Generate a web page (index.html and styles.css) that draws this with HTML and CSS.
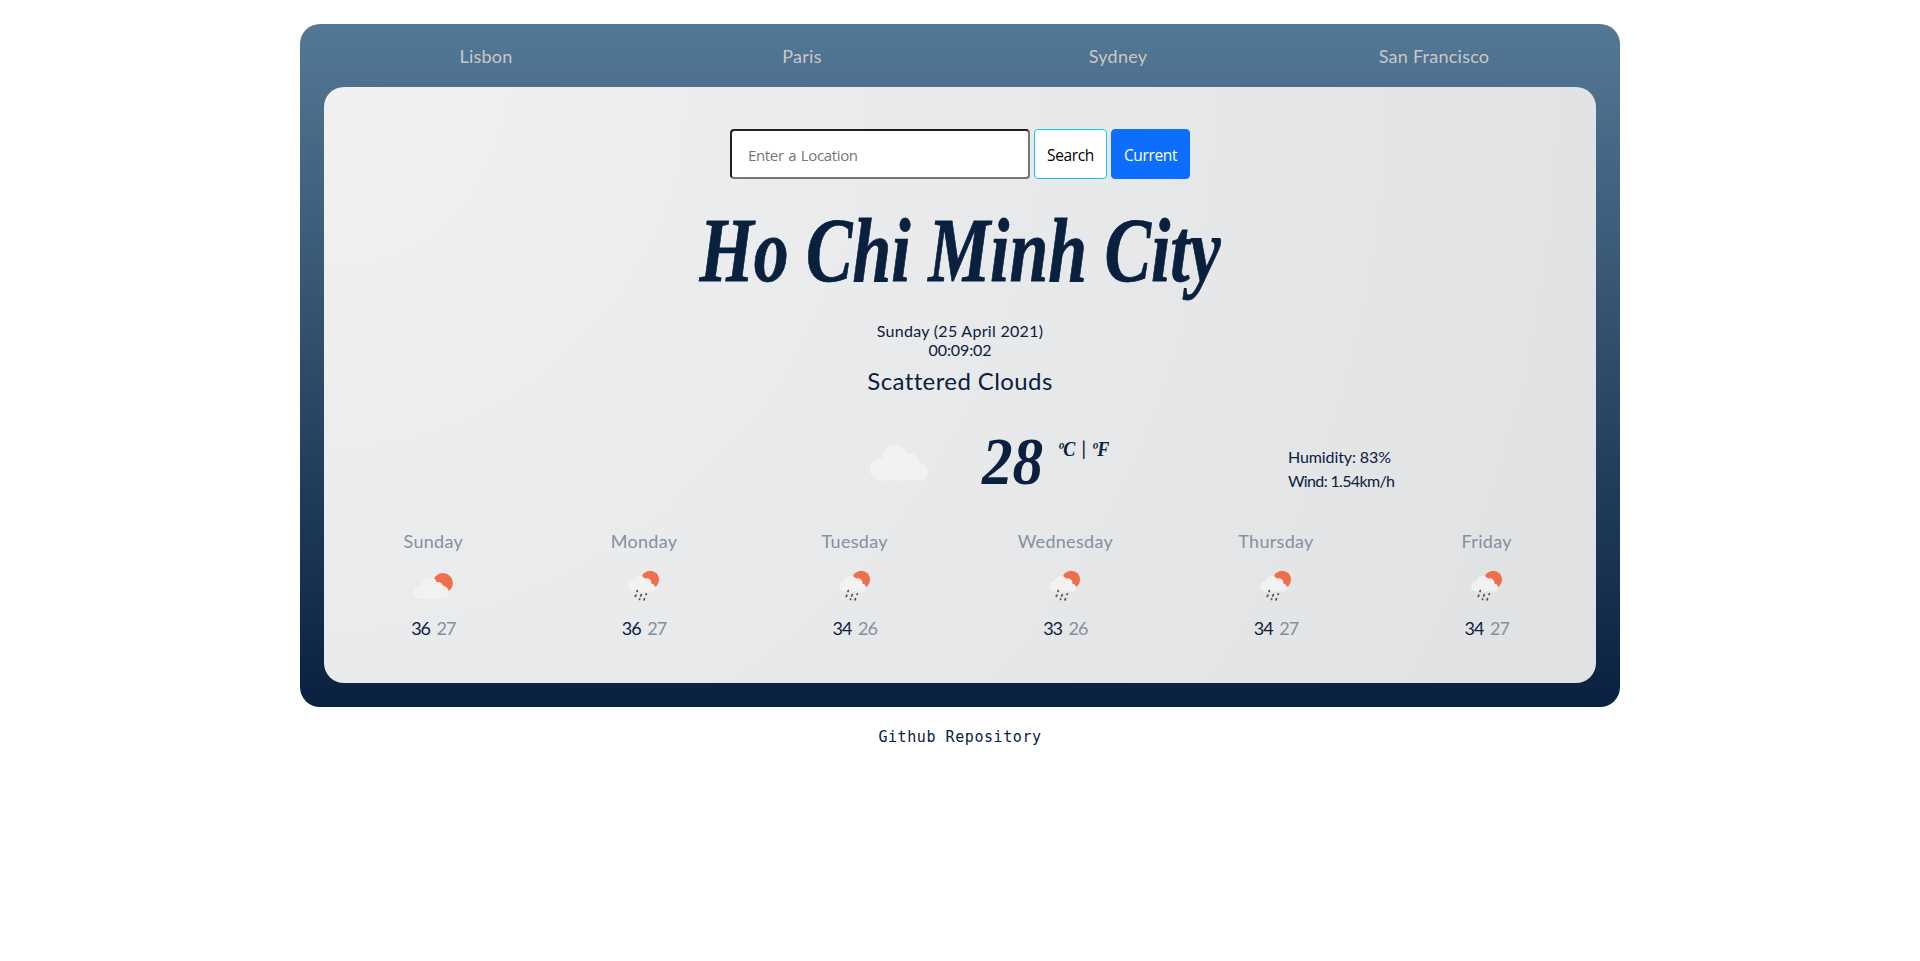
FILE: index.html
```html
<!DOCTYPE html>
<html lang="en">
<head>
<meta charset="utf-8">
<title>Weather</title>
<link rel="stylesheet" href="styles.css">
</head>
<body>
<svg class="defs" width="0" height="0">
  <symbol id="cloud" viewBox="0 0 60 38"><path fill="#f2f2f0" d="M11 37.5A11 11 0 0 1 11 15.3H12.6A12.2 12.2 0 0 1 36.5 10.8A9.2 9.2 0 0 1 49.2 20.4H50.5A8.6 8.6 0 0 1 50.5 37.5Z"/></symbol>
  <symbol id="sunny-cloud" viewBox="0 0 50 40"><circle cx="34.9" cy="18" r="10" fill="#ef6f4c"/><path fill="#eeeeed" d="M25 12.500Q28 14 28.300 17.500Q32.500 15.500 35 20.500Q40 21.500 41 27L36 32H22Z"/><path fill="#f2f2f0" d="M12.500 34A6.700 6.700 0 0 1 12.500 20.600H13.600A7.700 7.700 0 0 1 28.700 18.100A5.600 5.600 0 0 1 34.800 23.700A5.200 5.200 0 0 1 36.300 34Z"/></symbol>
  <symbol id="rain" viewBox="0 0 42 40"><circle cx="27.200" cy="14.600" r="8.900" fill="#ef6f4c"/><path fill="#f2f2f2" d="M10 26.600A5.400 5.400 0 0 1 10 15.900H10.600A6.200 6.200 0 0 1 21.900 13.600A4.700 4.700 0 0 1 28.400 18.700A4.100 4.100 0 0 1 29.500 26.600Z"/><path stroke="#555" stroke-width="1.800" stroke-linecap="round" d="M14.300 25.700L14 26.400M12.900 30.200L12.300 31.400M18.200 29.700L17.700 31M23.300 29L23 29.400M16.700 34L16.500 34.400M21.500 33.700L21 34.800"/></symbol>
</svg>
<main class="app">
  <nav class="cities"><a>Lisbon</a><a>Paris</a><a>Sydney</a><a>San Francisco</a></nav>
  <section class="card">
    <form class="search">
      <input class="location" type="text" placeholder="Enter a Location">
      <button class="btn find" type="button">Search</button>
      <button class="btn current" type="button">Current</button>
    </form>
    <h1 class="city"><span>Ho Chi Minh City</span></h1>
    <p class="date">Sunday (25 April 2021)</p>
    <p class="time">00:09:02</p>
    <p class="sky">Scattered Clouds</p>
    <div class="now">
      <div class="now-icon"><svg width="60" height="38"><use href="#cloud"/></svg></div>
      <div class="temp"><span class="deg">28</span><span class="units"><b>ºC</b> <i>|</i> <b>ºF</b></span></div>
      <div class="details"><p class="humidity">Humidity: 83%</p><p class="wind">Wind: 1.54km/h</p></div>
    </div>
    <div class="forecast">
      <div class="day"><p>Sunday</p><svg width="50" height="40"><use href="#sunny-cloud"/></svg><div><b>36</b> 27</div></div>
      <div class="day"><p>Monday</p><svg width="42" height="40"><use href="#rain"/></svg><div><b>36</b> 27</div></div>
      <div class="day"><p>Tuesday</p><svg width="42" height="40"><use href="#rain"/></svg><div><b>34</b> 26</div></div>
      <div class="day"><p>Wednesday</p><svg width="42" height="40"><use href="#rain"/></svg><div><b>33</b> 26</div></div>
      <div class="day"><p>Thursday</p><svg width="42" height="40"><use href="#rain"/></svg><div><b>34</b> 27</div></div>
      <div class="day"><p>Friday</p><svg width="42" height="40"><use href="#rain"/></svg><div><b>34</b> 27</div></div>
    </div>
  </section>
</main>
<footer class="footer"><a>Github Repository</a></footer>
</body>
</html>
```
FILE: styles.css
```css
* { box-sizing: border-box; margin: 0; padding: 0; }
body { background: #fff; color: #09203f; font-family: Lato, sans-serif; }
.defs { display: block; }
.app { width: 1320px; height: 683px; margin: 24px auto 0; padding: 0 24px 24px; border-radius: 20px; background: linear-gradient(#537895, #09203f); }
.cities { height: 63px; padding: 0 4px; display: grid; grid-template-columns: repeat(4, 1fr); text-align: center; font-size: 18px; line-height: 64px; color: #c8c8c8; letter-spacing: .25px; }
.card { height: 596px; padding: 42px 4px 0; border-radius: 20px; background: radial-gradient(circle farthest-corner at 0 0, #f1f1f1 0%, #e9eaec 45%, #e0e1e2 100%); }
.search { display: flex; justify-content: center; gap: 4px; height: 50px; }
.location, .btn { font: 16px "Open Sans", "Noto Sans", sans-serif; border-radius: 4px; }
.location { width: 300px; padding: 1px 16px 0; border: 2px solid; border-color: #212121 #767676 #767676 #212121; background: #fff; font-size: 15px; letter-spacing: -.35px; word-spacing: 1px; }
.location::placeholder { color: #757575; }
.btn { font-size: 15.5px; letter-spacing: -.35px; padding-top: 1px; }
.find { width: 73px; background: #fff; border: 1px solid #0dcaf0; color: #000; }
.current { width: 79px; background: #0d6efd; border: 1px solid #0d6efd; color: #fff; }
.city { height: 141px; padding-top: 3px; display: flex; justify-content: center; font: italic bold 91px/138px "Liberation Serif", serif; white-space: nowrap; -webkit-text-stroke: .8px #09203f; }
.city span { transform: scaleX(.766); }
.date, .time { font-size: 16px; line-height: 19px; text-align: center; }
.date { margin-top: 1px; letter-spacing: .3px; }
.time { letter-spacing: -.1px; }
.sky { font-size: 24px; line-height: 42px; text-align: center; letter-spacing: .4px; margin-top: 1px; }
.now { display: grid; grid-template-columns: 632px 300px 1fr; height: 127px; }
.now-icon { text-align: right; padding: 41px 30px 0 0; }
.temp { display: flex; padding: 19px 0 0 22px; font-family: "Liberation Serif", serif; }
.deg { width: 75px; font: italic bold 68px/80px "Liberation Serif", serif; transform: scaleX(.9); transform-origin: left; }
.units { padding-top: 15px; font-size: 20px; line-height: 24px; white-space: nowrap; }
.units b { font-style: italic; display: inline-block; transform: scaleX(.9); }
.units i { font: 20px/24px Lato, sans-serif; }
.details { padding: 43px 0 0 28px; font-size: 16px; line-height: 24px; }
.humidity { letter-spacing: -.1px; }
.wind { letter-spacing: -.65px; }
.forecast { display: grid; grid-template-columns: repeat(6, 1fr); text-align: center; font-size: 18px; color: #8490a0; }
.day p { line-height: 24px; letter-spacing: .3px; }
.day svg { display: block; margin: 12px auto; }
.day div { line-height: 22px; letter-spacing: -1px; word-spacing: 3px; }
.day b { font-weight: 400; color: #09203f; }
.footer { padding-top: 20px; text-align: center; font: 15px/20px "DejaVu Sans Mono", monospace; letter-spacing: .57px; }
```
